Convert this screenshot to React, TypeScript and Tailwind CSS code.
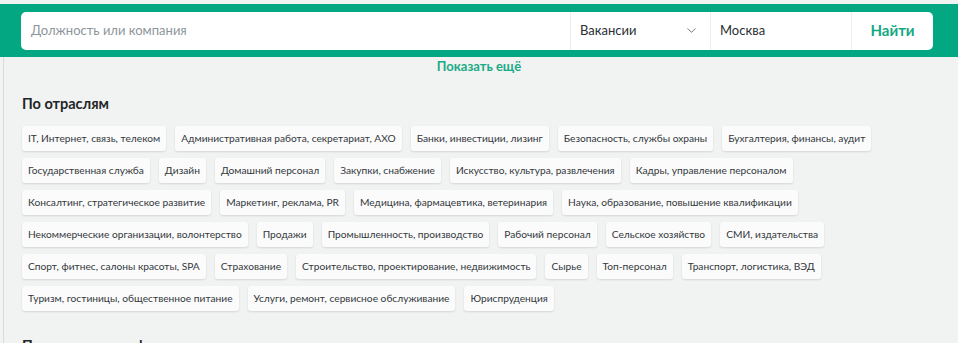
import { ChevronDown } from 'lucide-react';

const industries = [
  'IT, Интернет, связь, телеком',
  'Административная работа, секретариат, АХО',
  'Банки, инвестиции, лизинг',
  'Безопасность, службы охраны',
  'Бухгалтерия, финансы, аудит',
  'Государственная служба',
  'Дизайн',
  'Домашний персонал',
  'Закупки, снабжение',
  'Искусство, культура, развлечения',
  'Кадры, управление персоналом',
  'Консалтинг, стратегическое развитие',
  'Маркетинг, реклама, PR',
  'Медицина, фармацевтика, ветеринария',
  'Наука, образование, повышение квалификации',
  'Некоммерческие организации, волонтерство',
  'Продажи',
  'Промышленность, производство',
  'Рабочий персонал',
  'Сельское хозяйство',
  'СМИ, издательства',
  'Спорт, фитнес, салоны красоты, SPA',
  'Страхование',
  'Строительство, проектирование, недвижимость',
  'Сырье',
  'Топ-персонал',
  'Транспорт, логистика, ВЭД',
  'Туризм, гостиницы, общественное питание',
  'Услуги, ремонт, сервисное обслуживание',
  'Юриспруденция',
];

export default function App() {
  return (
    <div className="h-[343px] w-[958px] overflow-hidden bg-[#f1f2f2] pt-[4px] font-['Lato','Noto_Sans',sans-serif]">
      {/* Поиск */}
      <div className="flex h-[53px] items-center bg-[#03a883] px-[21px]">
        <div className="flex h-[38px] w-[912px] items-stretch overflow-hidden rounded-[5px] bg-white">
          <div className="flex w-[549px] items-center pl-[10px] text-[13px] text-[#8d959a]">
            Должность или компания
          </div>
          <div className="flex w-[140px] items-center justify-between border-l border-[#eceeee] pl-[9px] pr-[11px] text-[13px] text-[#2b2f33]">
            <span>Вакансии</span>
            <ChevronDown size={15} strokeWidth={1.5} className="text-[#6b7075]" />
          </div>
          <div className="flex w-[141px] items-center border-l border-[#eceeee] pl-[9px] text-[13px] text-[#2b2f33]">
            Москва
          </div>
          <div className="flex flex-1 items-center justify-center border-l border-[#eceeee] text-[15px] font-bold text-[#13a883]">
            Найти
          </div>
        </div>
      </div>

      <div className="ml-[3px] h-full border-l border-[#d9dbdb] pl-[18px]">
        <div className="-ml-[22px] pt-[1px] text-center text-[13px] leading-[16px] font-bold text-[#1aaa86]">
          Показать ещё
        </div>

        {/* По отраслям */}
        <h2 className="mt-[20px] text-[14.5px] leading-[20px] font-bold text-[#222628]">По отраслям</h2>
        <div className="mt-[12px] flex w-[900px] flex-wrap gap-x-[9px] gap-y-[7px]">
          {industries.map((item) => (
            <div
              key={item}
              className="flex h-[25px] items-center rounded-[3px] bg-[#fbfbfb] px-[6px] text-[10.2px] text-[#33383c] shadow-[0_1px_2px_rgba(0,0,0,0.12)]"
            >
              {item}
            </div>
          ))}
        </div>

        <h2 className="mt-[25px] text-[14.5px] leading-[20px] font-bold text-[#222628]">Популярные профессии</h2>
      </div>
    </div>
  );
}
